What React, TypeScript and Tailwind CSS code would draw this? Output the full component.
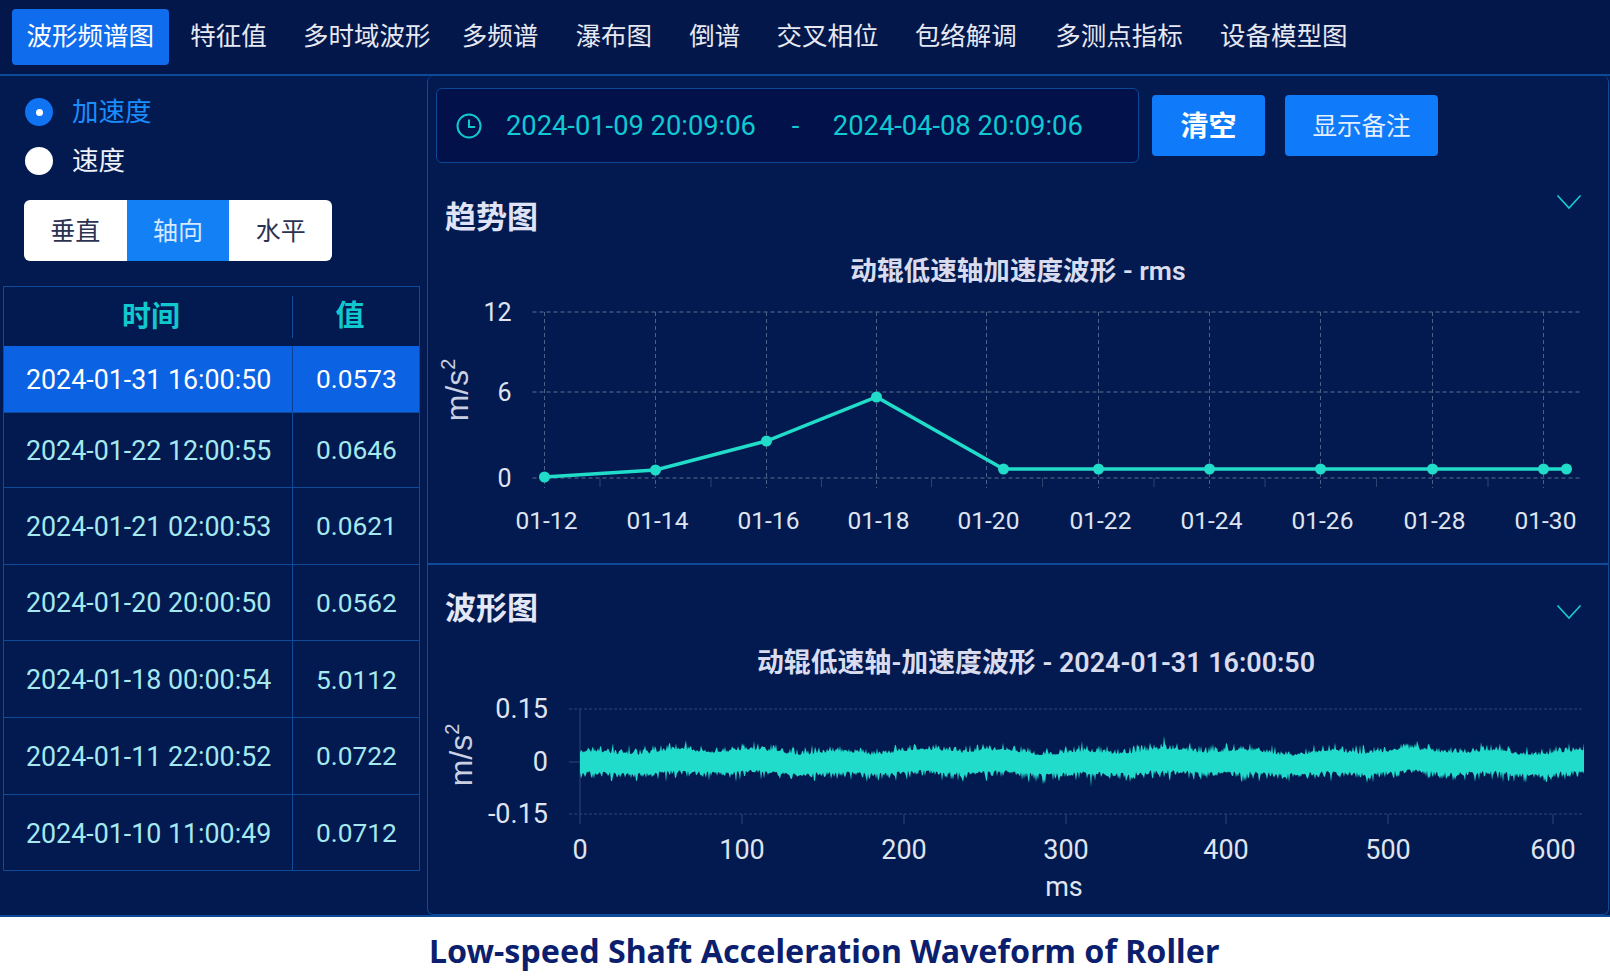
import React from 'react';

// ── Data ───────────────────────────────────────────────────────────────────────
const TABS = [
  { label: '波形频谱图', cls: '' },
  { label: '特征值', cls: '' },
  { label: '多时域波形', cls: '' },
  { label: '多频谱', cls: 'ml-[-5px]' },
  { label: '瀑布图', cls: 'ml-[1px]' },
  { label: '倒谱', cls: 'ml-[1px]' },
  { label: '交叉相位', cls: '' },
  { label: '包络解调', cls: '' },
  { label: '多测点指标', cls: 'ml-[2px]' },
  { label: '设备模型图', cls: 'ml-[1px]' },
];

const ROWS = [
  { time: '2024-01-22 12:00:55', value: '0.0646', short: true },
  { time: '2024-01-21 02:00:53', value: '0.0621' },
  { time: '2024-01-20 20:00:50', value: '0.0562' },
  { time: '2024-01-18 00:00:54', value: '5.0112' },
  { time: '2024-01-11 22:00:52', value: '0.0722' },
  { time: '2024-01-10 11:00:49', value: '0.0712' },
];

const TREND_X = [545, 656, 767, 877, 987, 1099, 1210, 1321, 1433, 1544];
const TREND_LABELS = ['01-12', '01-14', '01-16', '01-18', '01-20', '01-22', '01-24', '01-26', '01-28', '01-30'];
const TREND_POINTS: [number, number][] = [
  [545, 477], [656, 470], [767, 441], [877, 397], [1004, 469], [1099, 469],
  [1210, 469], [1321, 469], [1433, 469], [1544, 469], [1567, 469],
];

const WAVE_TICKS = [
  { x: 579, label: '0' }, { x: 741, label: '100' }, { x: 903, label: '200' }, { x: 1065, label: '300' },
  { x: 1225, label: '400' }, { x: 1387, label: '500' }, { x: 1552, label: '600' },
];

// seeded noise so the wave is the same on every load
function buildWave(): string {
  let seed = 1337;
  const rnd = () => {
    seed = (seed * 16807) % 2147483647;
    return seed / 2147483647;
  };
  const top: string[] = [];
  const bottom: string[] = [];
  for (let x = 579; x <= 1583; x += 1) {
    const slow = Math.sin(x / 13) * 1.8 + Math.sin(x / 37 + 1) * 1.4;
    let up = 9.5 + slow + rnd() * rnd() * 11;
    let down = 9.5 - slow * 0.6 + rnd() * rnd() * 12;
    if (x === 1163) up = 26;
    if (x === 1090) down = 25;
    top.push(`${x},${(761 - up).toFixed(1)}`);
    bottom.unshift(`${x},${(761 + down).toFixed(1)}`);
  }
  return [...top, ...bottom].join(' ');
}
const WAVE = buildWave();

// ── Small drawings ─────────────────────────────────────────────────────────────
const Chevron: React.FC = () => (
  <svg width="26" height="16" viewBox="0 0 26 16" fill="none" stroke="#17cdd2" strokeWidth="1.6" aria-hidden="true">
    <polyline points="1.5,1.5 13,14 24.5,1.5" />
  </svg>
);

const ClockIcon: React.FC = () => (
  <svg width="26" height="26" viewBox="0 0 26 26" fill="none" stroke="#12c8d0" strokeWidth="2" aria-hidden="true">
    <circle cx="13" cy="13" r="11.5" />
    <path d="M13 6.5V14H19" />
  </svg>
);

const Unit: React.FC<{ x: number; y: number }> = ({ x, y }) => (
  <text
    transform={`translate(${x} ${y}) rotate(-90)`}
    textAnchor="middle"
    fill="#c9d0e2"
    fontSize="32"
    fontFamily="'Liberation Sans', sans-serif"
  >
    m/s<tspan fontSize="20" dy="-13">2</tspan>
  </text>
);

// ── Charts ─────────────────────────────────────────────────────────────────────
const TrendChart: React.FC = () => (
  <svg width="1180" height="250" viewBox="428.5 290 1180 250" className="block" aria-hidden="true">
    {[312, 392, 478].map((y) => (
      <line key={y} x1="533" x2="1583" y1={y} y2={y} stroke="#5f6f94" strokeWidth="1" strokeDasharray="4 3" />
    ))}
    {TREND_X.map((x) => (
      <line key={x} x1={x} x2={x} y1="312" y2="488" stroke="#4f6088" strokeWidth="1" strokeDasharray="4 3" />
    ))}
    {TREND_X.slice(0, -1).map((x, i) => (
      <line key={x} x1={(x + TREND_X[i + 1]) / 2} x2={(x + TREND_X[i + 1]) / 2} y1="478" y2="487" stroke="#2f4272" strokeWidth="1" />
    ))}
    <polyline points={TREND_POINTS.map((p) => p.join(',')).join(' ')} fill="none" stroke="#20dcc9" strokeWidth="3.5" />
    {TREND_POINTS.map(([x, y]) => (
      <circle key={x} cx={x} cy={y} r="5.5" fill="#20dcc9" />
    ))}
    <g fill="#dfe4f0" fontSize="25" textAnchor="end" dominantBaseline="central">
      <text x="512" y="312">12</text>
      <text x="512" y="392">6</text>
      <text x="512" y="478">0</text>
    </g>
    <g fill="#dfe4f0" fontSize="24.5" textAnchor="middle" dominantBaseline="central">
      {TREND_X.map((x, i) => (
        <text key={x} x={x + 2} y="520">{TREND_LABELS[i]}</text>
      ))}
    </g>
    <Unit x={468} y={390} />
  </svg>
);

const WaveChart: React.FC = () => (
  <svg width="1180" height="214" viewBox="427 688 1180 214" className="block" aria-hidden="true">
    {[708, 813].map((y) => (
      <line key={y} x1="568" x2="1583" y1={y} y2={y} stroke="#2c4578" strokeWidth="1" strokeDasharray="3 2" />
    ))}
    <line x1="568" x2="579" y1="761" y2="761" stroke="#2c4578" />
    <line x1="579" x2="579" y1="708" y2="823" stroke="#2c4578" />
    {WAVE_TICKS.slice(1).map((t) => (
      <line key={t.x} x1={t.x} x2={t.x} y1="813" y2="823" stroke="#2c4578" />
    ))}
    <polygon points={WAVE} fill="#22dccb" />
    <g fill="#dfe4f0" fontSize="27" textAnchor="end" dominantBaseline="central">
      <text x="547" y="708">0.15</text>
      <text x="547" y="761">0</text>
      <text x="547" y="813">-0.15</text>
    </g>
    <g fill="#dfe4f0" fontSize="27" textAnchor="middle" dominantBaseline="central">
      {WAVE_TICKS.map((t) => (
        <text key={t.x} x={t.x} y="849">{t.label}</text>
      ))}
      <text x="1063" y="886">ms</text>
    </g>
    <Unit x={471} y={754} />
  </svg>
);

// ── Left column ────────────────────────────────────────────────────────────────
const LeftPanel: React.FC = () => (
  <aside className="w-[427px] shrink-0 pt-[12px]">
    <div className="flex flex-col pl-[25px]">
      <label className="flex items-center gap-[19px] h-[48px] text-[26.5px] text-[#1a8dff]">
        <span className="flex items-center justify-center w-[28px] h-[28px] rounded-full bg-[#0f73f2]">
          <span className="w-[7px] h-[7px] rounded-full bg-white" />
        </span>
        加速度
      </label>
      <label className="flex items-center gap-[19px] h-[50px] text-[26.5px] text-[#eef1f8]">
        <span className="w-[28px] h-[28px] rounded-full bg-white" />
        速度
      </label>
    </div>

    <div className="flex w-[308px] h-[61px] ml-[24px] mt-[14px] rounded-[6px] overflow-hidden text-[25px]">
      <div className="flex-1 flex items-center justify-center pt-[3px] bg-white text-[#2b3350]">垂直</div>
      <div className="flex-1 flex items-center justify-center pt-[3px] bg-[#1480f5] text-[#d5e8ff]">轴向</div>
      <div className="flex-1 flex items-center justify-center pt-[3px] bg-white text-[#2b3350]">水平</div>
    </div>

    <div className="ml-[3px] mt-[25px] w-[417px] border border-[#0d4a98]">
      <div className="flex h-[59px] items-center text-[29px] font-bold text-[#12c8cf]">
        <div className="w-[289px] text-center pl-[23px] pr-[17px] border-r border-[#0d4a98] h-[42px] leading-[42px]">时间</div>
        <div className="flex-1 text-center pr-[12px]">值</div>
      </div>
      <div className="flex h-[66px] items-center bg-[#0b62e2] text-white text-[26.8px]">
        <div className="w-[289px] h-full flex items-center pl-[22px] pt-[2px] border-r border-[#0a3f9a]">2024-01-31 16:00:50</div>
        <div className="flex-1 pl-[23px] pt-[2px] text-[26.3px]">0.0573</div>
      </div>
      {ROWS.map((r) => (
        <div
          key={r.time}
          className={
            r.short
              ? 'flex h-[75px] items-center border-t border-[#0d4a98] text-[#a6e8ef] text-[26.8px]'
              : 'flex h-[76.7px] items-center border-t border-[#0d4a98] text-[#a6e8ef] text-[26.8px]'
          }
        >
          <div className="w-[289px] h-full flex items-center pl-[22px] pt-[2px] border-r border-[#0d4a98]">{r.time}</div>
          <div className="flex-1 pl-[23px] pt-[2px] text-[26.3px]">{r.value}</div>
        </div>
      ))}
    </div>
  </aside>
);

// ── Right column ───────────────────────────────────────────────────────────────
const RightPanel: React.FC = () => (
  <section className="flex-1 mr-[3px] border border-t-0 border-[#0d4a98] rounded-[6px] flex flex-col">
    <div className="h-[489px] border-b-2 border-[#0d4a98]">
      <div className="flex items-center pl-[8px] pt-[12px]">
        <div className="flex items-center w-[703px] h-[75px] pl-[19px] rounded-[6px] border border-[#0c4896] bg-[#03114a] text-[#10c9d2] text-[27.3px]">
          <ClockIcon />
          <span className="ml-[24px] pt-[2px]">2024-01-09 20:09:06</span>
          <span className="ml-[36px] w-[41px] pt-[2px]">-</span>
          <span className="pt-[2px]">2024-04-08 20:09:06</span>
        </div>
        <button className="ml-[13px] w-[113px] h-[61px] pt-[2px] rounded-[4px] bg-[#0f7bfa] text-white text-[28px] font-bold">清空</button>
        <button className="ml-[20px] w-[153px] h-[61px] pt-[4px] rounded-[4px] bg-[#0f7bfa] text-[#e4efff] text-[24.5px]">显示备注</button>
      </div>
      <div className="flex items-start justify-between pl-[17px] pr-[26px] mt-[35px] h-[40px]">
        <h2 className="text-[31px] leading-[40px] font-bold text-[#dfe3f5]">趋势图</h2>
        <span className="mt-[-4px]"><Chevron /></span>
      </div>
      <p className="mt-[15px] h-[36px] text-center text-[26.6px] leading-[36px] font-semibold text-[#d8dcee]">
        动辊低速轴加速度波形 - rms
      </p>
      <div className="pt-[1px]">
        <TrendChart />
      </div>
    </div>
    <div className="flex-1">
      <div className="flex items-start justify-between pl-[17px] pr-[26px] pt-[24px] h-[64px]">
        <h2 className="text-[31px] leading-[40px] font-bold text-[#e4e8f6]">波形图</h2>
        <span className="mt-[15px]"><Chevron /></span>
      </div>
      <p className="mt-[16px] h-[36px] pl-[36px] text-center text-[26.9px] leading-[36px] font-semibold text-[#d8dcee]">
        动辊低速轴-加速度波形 - 2024-01-31 16:00:50
      </p>
      <div className="pt-[8px]">
        <WaveChart />
      </div>
    </div>
  </section>
);

// ── Page ───────────────────────────────────────────────────────────────────────
export default function App() {
  return (
    <div className="w-[1610px] h-[977px] flex flex-col overflow-hidden bg-white [font-family:Roboto,'Noto_Sans_CJK_SC',sans-serif]">
      <nav className="flex items-center gap-[7.25px] h-[76px] pl-[12px] pb-[1px] bg-[#03174a] border-b-2 border-[#0d4a98] text-[25.5px] text-[#e6e9f2]">
        {TABS.map((t, i) => (
          <div
            key={t.label}
            className={
              i === 0
                ? 'flex items-center h-[56px] px-[14.5px] rounded-[4px] bg-[#0f6cec] text-white'
                : `flex items-center h-[56px] px-[14.5px] ${t.cls}`
            }
          >
            {t.label}
          </div>
        ))}
      </nav>
      <main className="flex h-[841px] bg-[#021a4f] border-b-2 border-[#0d4a98]">
        <LeftPanel />
        <RightPanel />
      </main>
      <footer className="flex-1 flex items-center pl-[429px] pt-[8px] text-[32.2px] font-bold text-[#0c1f6e] [font-family:'Noto_Sans',sans-serif]">
        Low-speed Shaft Acceleration Waveform of Roller
      </footer>
    </div>
  );
}
